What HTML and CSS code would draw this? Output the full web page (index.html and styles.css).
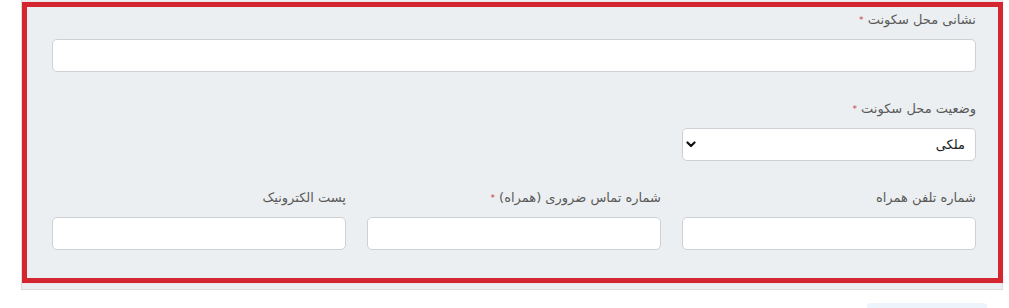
FILE: index.html
```html
<!DOCTYPE html>
<html lang="fa" dir="rtl">
<head>
    <meta charset="UTF-8">
    <meta name="viewport" content="width=device-width, initial-scale=1.0">
    <title>اطلاعات سکونت</title>
    <link rel="stylesheet" href="styles.css">
</head>
<body>
    <div class="panel">
        <!-- highlighted block -->
        <div class="highlight">
            <div class="field-row">
                <div class="field full">
                    <label>نشانی محل سکونت <span class="req">*</span></label>
                    <input type="text" class="form-input">
                </div>
            </div>

            <div class="field-row">
                <div class="field">
                    <label>وضعیت محل سکونت <span class="req">*</span></label>
                    <div class="select-wrap">
                        <select class="form-input form-select">
                            <option>ملکی</option>
                            <option>استیجاری</option>
                        </select>
                        <svg class="chevron" width="10" height="7" viewBox="0 0 10 7">
                            <path d="M1.5 1.5 L5 5 L8.5 1.5" fill="none" stroke="#111" stroke-width="2.2" stroke-linecap="round" stroke-linejoin="round"/>
                        </svg>
                    </div>
                </div>
            </div>

            <div class="field-row last">
                <div class="field">
                    <label>شماره تلفن همراه</label>
                    <input type="text" class="form-input">
                </div>
                <div class="field">
                    <label>شماره تماس ضروری (همراه) <span class="req">*</span></label>
                    <input type="text" class="form-input">
                </div>
                <div class="field">
                    <label>پست الکترونیک</label>
                    <input type="text" class="form-input">
                </div>
            </div>
        </div>
    </div>

    <div class="actions">
        <div class="btn-next"></div>
    </div>
</body>
</html>
```

FILE: styles.css
```css
body {
    margin: 0;
    background-color: #fff;
    font-family: 'DejaVu Sans', 'Noto Sans', sans-serif;
    font-size: 13px;
    color: #555;
    overflow: hidden;
}

.panel {
    box-sizing: border-box;
    width: 982px;
    margin: -1px 6px 0 0;
    border: 1px solid #dedede;
    background-color: #eceff1;
    padding: 2px 0 6px 0;
}

.highlight {
    border: 5px solid #d42631;
    margin-right: -1px;
    padding: 3px 22px 28px 25px;
    box-shadow: 0 0 1px #f3b5b8;
}

.field-row {
    display: grid;
    grid-template-columns: repeat(3, 294px);
    column-gap: 21px;
    margin-bottom: 27px;
}

.field-row.last {
    margin-bottom: 0;
}

.field.full {
    grid-column: 1 / 4;
}

.field label {
    display: block;
    height: 20px;
    line-height: 20px;
    margin-bottom: 9px;
    color: #5a5a5a;
}

.req {
    color: #c9403f;
    font-size: 9px;
    vertical-align: 1px;
}

.form-input {
    box-sizing: border-box;
    display: block;
    width: 100%;
    height: 33px;
    border: 1px solid #cdd1d6;
    border-radius: 5px;
    background-color: #fff;
    font-family: inherit;
    font-size: 13px;
    color: #222;
    padding: 0 10px;
    outline: none;
}

.select-wrap {
    position: relative;
}

.form-select {
    appearance: none;
    -webkit-appearance: none;
    padding-right: 10px;
    direction: rtl;
}

.chevron {
    position: absolute;
    left: 4px;
    top: 13px;
    pointer-events: none;
}

.actions {
    display: flex;
    justify-content: flex-start;
    padding-right: 22px;
    margin-top: 13px;
}

.btn-next {
    width: 120px;
    height: 30px;
    border-radius: 4px;
    background-color: #eef4fb;
}
```
